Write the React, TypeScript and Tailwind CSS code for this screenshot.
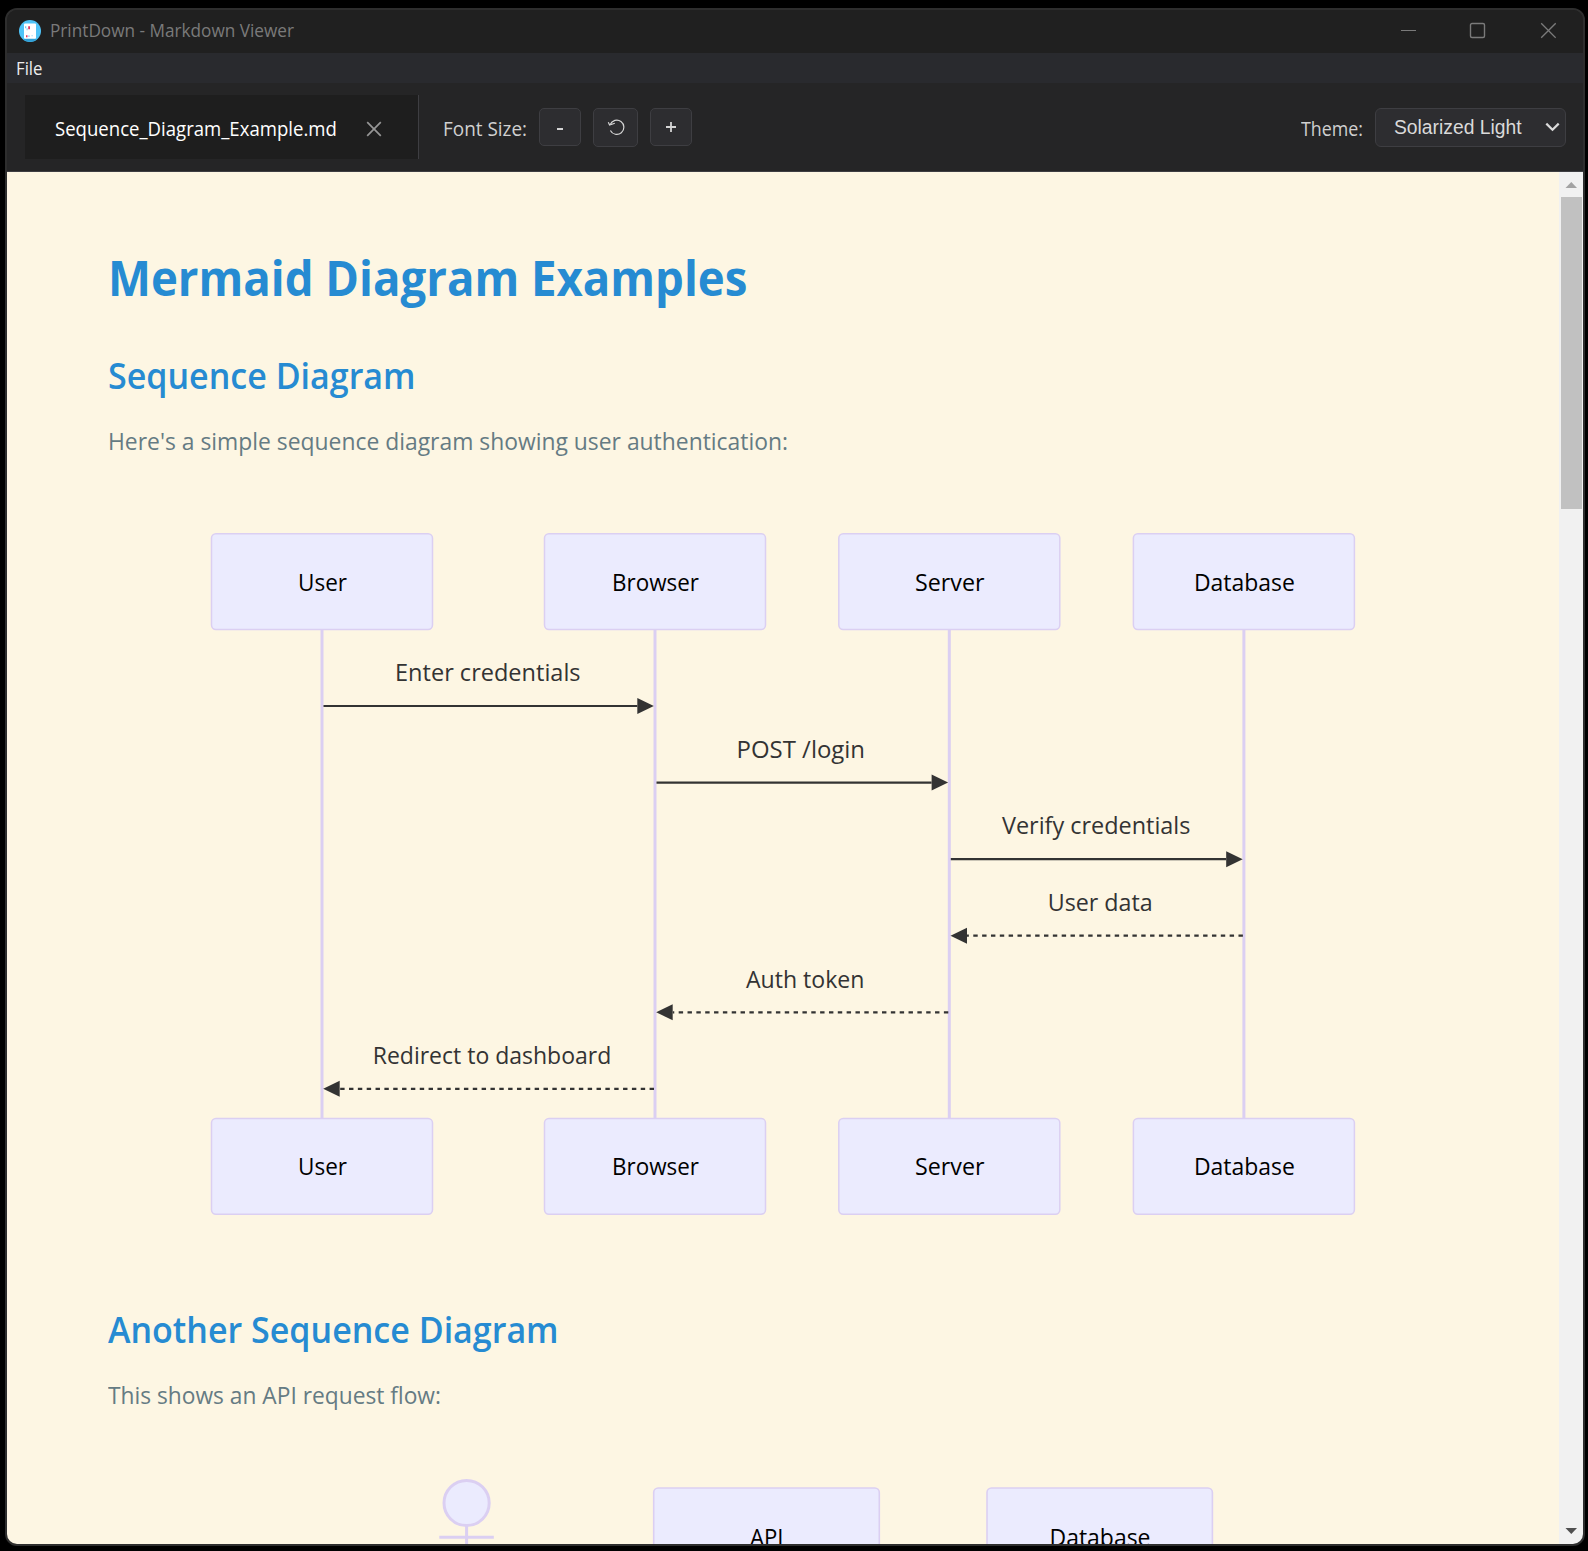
import type { ReactNode } from "react";

const LINE = "#dbcff2";
const FILL = "#ebebfe";
const INK = "#333333";

type Participant = { name: string; x: number; textWidth: number };
type Message = {
  text: string;
  from: number;
  to: number;
  y: number;
  center: number;
  textWidth: number;
};

const participants: Participant[] = [
  { name: "User", x: 322, textWidth: 49 },
  { name: "Browser", x: 655, textWidth: 87 },
  { name: "Server", x: 949.3, textWidth: 69.5 },
  { name: "Database", x: 1243.9, textWidth: 101 },
];

const messages: Message[] = [
  { text: "Enter credentials", from: 322, to: 655, y: 706, center: 487.8, textWidth: 185.5 },
  { text: "POST /login", from: 655, to: 949.3, y: 782.6, center: 800.8, textWidth: 128.5 },
  { text: "Verify credentials", from: 949.3, to: 1243.9, y: 859.2, center: 1096.2, textWidth: 188.5 },
  { text: "User data", from: 1243.9, to: 949.3, y: 935.7, center: 1100.2, textWidth: 105 },
  { text: "Auth token", from: 949.3, to: 655, y: 1012.3, center: 805.2, textWidth: 118.5 },
  { text: "Redirect to dashboard", from: 655, to: 322, y: 1088.8, center: 492, textWidth: 238.5 },
];

function Label({ x, y, width, fill, children }: { x: number; y: number; width: number; fill: string; children: ReactNode }) {
  return (
    <text
      x={x}
      y={y}
      textAnchor="middle"
      textLength={width}
      lengthAdjust="spacingAndGlyphs"
      fill={fill}
      className="font-['Open_Sans',sans-serif] text-[23.5px]"
    >
      {children}
    </text>
  );
}

function ParticipantBox({ p, y, textY }: { p: Participant; y: number; textY: number }) {
  return (
    <g>
      <rect x={p.x - 110.5} y={y} width="221" height="95.8" rx="4.4" fill={FILL} stroke={LINE} strokeWidth="1.5" />
      <Label x={p.x + 0.5} y={textY} width={p.textWidth} fill="#000000">
        {p.name}
      </Label>
    </g>
  );
}

function MessageArrow({ m }: { m: Message }) {
  const dir = m.to > m.from ? 1 : -1;
  const dashed = dir < 0;
  const tip = m.to - dir * (dashed ? 1.2 : 1.2);
  const base = tip - dir * 16.5;
  return (
    <g>
      <Label x={m.center} y={m.y - 24.8} width={m.textWidth} fill={INK}>
        {m.text}
      </Label>
      <line
        x1={dashed ? m.from - 1 : m.from + 1.5}
        x2={base}
        y1={m.y}
        y2={m.y}
        stroke={INK}
        strokeWidth="2.2"
        strokeDasharray={dashed ? "4.42 4.42" : undefined}
      />
      <path d={`M${base} ${m.y - 8} L${tip} ${m.y} L${base} ${m.y + 8} Z`} fill={INK} />
    </g>
  );
}

function AuthDiagram() {
  return (
    <svg className="mt-[59px] block h-[708px] w-[1350px]" viewBox="108 520 1350 708">
      {participants.map((p) => (
        <g key={p.name}>
          <line x1={p.x} x2={p.x} y1="629" y2="1119" stroke={LINE} strokeWidth="3" />
          <ParticipantBox p={p} y={533.7} textY={591} />
          <ParticipantBox p={p} y={1118.4} textY={1175} />
        </g>
      ))}
      {messages.map((m) => (
        <MessageArrow key={m.text} m={m} />
      ))}
    </svg>
  );
}

function ApiDiagram() {
  return (
    <svg className="mt-[55px] block h-[120px] w-[1350px]" viewBox="108 1470 1350 120">
      <g fill={FILL} stroke={LINE} strokeWidth="3">
        <line x1="466.6" x2="466.6" y1="1526" y2="1570" />
        <line x1="439.3" x2="493.8" y1="1537.3" y2="1537.3" />
        <circle cx="466.6" cy="1503" r="22.6" />
      </g>
      <rect x="653.7" y="1488" width="225.6" height="97.5" rx="4.5" fill={FILL} stroke={LINE} strokeWidth="1.6" />
      <rect x="987" y="1488" width="225.4" height="97.5" rx="4.5" fill={FILL} stroke={LINE} strokeWidth="1.6" />
      <Label x={766.8} y={1546} width={33.5} fill="#000000">
        API
      </Label>
      <Label x={1100} y={1546} width={101} fill="#000000">
        Database
      </Label>
    </svg>
  );
}

function AppIcon() {
  return (
    <svg className="h-[22px] w-[22px] shrink-0" viewBox="0 0 22 22">
      <circle cx="11" cy="11" r="11" fill="#4fc3f7" />
      <path d="M4 19.5 Q11 16 18 19.5 Q11 24 4 19.5Z" fill="#2f9fd6" />
      <rect x="5" y="3.5" width="12" height="15.3" rx="1" fill="#ffffff" />
      <path d="M9.2 6.3h1.8v3h-1.8zM7 15.2h1.5v2H7z" fill="#e0355f" />
      <path d="M6 6.3h1.3v2H6zM7.6 8.2h1v2h-1zM9.2 15.4h1.5v1.4H9.2zM12.6 15.2h1v1h-1z" fill="#7cc6ee" />
    </svg>
  );
}

function TitleBar() {
  return (
    <div className="flex h-[43px] shrink-0 items-center bg-[#202020] pb-[2px] pl-[12px] pr-[27px] text-[#7a7a7a]">
      <AppIcon />
      <span className="ml-[9px] inline-block origin-left scale-x-[.955] pb-px text-[18px] leading-[24px]">
        PrintDown - Markdown Viewer
      </span>
      <svg className="ml-auto h-[17px] w-[157px]" viewBox="0 0 157 17" fill="none" stroke="currentColor">
        <path d="M2 8.5h15" />
        <rect x="71.5" y="1.5" width="14" height="14" rx="1.5" strokeWidth="1.4" />
        <path d="M142.2 1.3l14.5 14.5M156.7 1.3L142.2 15.8" strokeWidth="1.3" />
      </svg>
    </div>
  );
}

function MenuBar() {
  return (
    <div className="flex h-[30px] shrink-0 items-center bg-[#292a2e] pb-px pl-[9px] text-[18px] leading-[24px] text-[#ededed]">
      <span className="inline-block origin-left scale-x-[.93]">File</span>
    </div>
  );
}

const buttonClass =
  "flex items-center justify-center rounded-[5px] border border-[#3e3e42] bg-[#2d2d30] text-[#d4d4d4]";

function Toolbar() {
  return (
    <div className="flex h-[89px] shrink-0 items-center border-b border-[#3e3e42] bg-[#252526] pl-[18px] pr-[17px] text-[19.5px] leading-[26px] text-[#d0d0d0]">
      <div className="flex h-[64px] w-[394px] items-center border-r border-[#3e3e42] bg-[#1e1e1e] pl-[30px] pt-[4px] text-white">
        <span className="inline-block w-[296px] origin-left scale-x-[.952]">Sequence_Diagram_Example.md</span>
        <svg className="ml-[15px] h-[16px] w-[16px]" viewBox="0 0 16 16" stroke="#969696" strokeWidth="1.7">
          <path d="M1.2 1.2l13.6 13.6M14.8 1.2L1.2 14.8" />
        </svg>
      </div>
      <span className="ml-[24px] inline-block w-[87px] origin-left scale-x-[.97] pt-[4px]">Font Size:</span>
      <div className="ml-[9px] flex items-start gap-[12px]">
        <div className={buttonClass + " h-[38px] w-[42px]"}>
          <svg className="h-[12px] w-[12px]" viewBox="0 0 12 12" stroke="currentColor" strokeWidth="2">
            <path d="M3 8h6" />
          </svg>
        </div>
        <div className={buttonClass + " h-[39px] w-[45px]"}>
          <svg className="h-[18px] w-[18px]" viewBox="0 0 18 18" fill="none" stroke="currentColor" strokeWidth="1.2">
            <path d="M3.2 6.6A7.1 7.1 0 1 1 3.4 12.4" />
            <path d="M1.3 4.2L2.6 7L7.8 5.2" />
          </svg>
        </div>
        <div className={buttonClass + " h-[38px] w-[42px]"}>
          <svg className="h-[12px] w-[12px]" viewBox="0 0 12 12" stroke="currentColor" strokeWidth="1.8">
            <path d="M1 6h10M6 1v10" />
          </svg>
        </div>
      </div>
      <span className="ml-auto mr-[6px] inline-block w-[68px] origin-left scale-x-[.915] pt-[4px]">Theme:</span>
      <div className="flex h-[39px] w-[191px] items-center rounded-[6px] border border-[#3e3e42] bg-[#2d2d30] pl-[18px] font-['Liberation_Sans',Arial,sans-serif] text-[19.3px] text-[#dadada]">
        <span className="whitespace-nowrap pt-[2px]">Solarized Light</span>
        <svg className="ml-auto mr-[5px] h-[10px] w-[15px]" viewBox="0 0 15 10" fill="none" stroke="currentColor" strokeWidth="2.2">
          <path d="M1.3 1.6l6.2 6.2l6.2-6.2" />
        </svg>
      </div>
    </div>
  );
}

function Scrollbar() {
  return (
    <div className="flex w-[24px] shrink-0 flex-col items-center bg-[#f1f1f1]">
      <svg className="h-[25px] w-[24px]" viewBox="0 0 24 25">
        <path d="M6.5 16h11.5L12.3 10z" fill="#a3a3a3" />
      </svg>
      <div className="h-[312px] w-[21px] bg-[#c1c1c1]" />
      <svg className="mt-auto h-[25px] w-[24px]" viewBox="0 0 24 25">
        <path d="M6.5 9h11.5L12.3 15z" fill="#505050" />
      </svg>
    </div>
  );
}

function Heading2({ children, className }: { children: ReactNode; className: string }) {
  return (
    <h2 className={"origin-left scale-x-[.945] text-[36px] font-semibold leading-[48px] text-[#268bd2] " + className}>
      {children}
    </h2>
  );
}

export default function App() {
  return (
    <div className="h-[1551px] w-[1588px] overflow-hidden bg-black pl-[5px] pt-[8px] font-['Open_Sans','Noto_Sans',sans-serif]">
      <div className="flex h-[1538px] w-[1580px] flex-col overflow-hidden rounded-[12px] border-2 border-[#2e2e2e] bg-[#202020]">
        <TitleBar />
        <MenuBar />
        <Toolbar />
        <div className="flex min-h-0 flex-1">
          <main className="min-w-0 flex-1 overflow-hidden bg-[#fdf6e3] pl-[101px]">
            <h1 className="mt-[74px] w-[1350px] origin-left scale-x-[.949] text-[48px] font-bold leading-[64px] text-[#268bd2]">
              Mermaid Diagram Examples
            </h1>
            <Heading2 className="mt-[42px] w-[1350px]">Sequence Diagram</Heading2>
            <p className="mt-[21px] w-[1350px] origin-left scale-x-[.953] text-[24px] leading-[40px] text-[#657b83]">
              Here's a simple sequence diagram showing user authentication:
            </p>
            <AuthDiagram />
            <Heading2 className="mt-[78px] w-[1350px]">Another Sequence Diagram</Heading2>
            <p className="mt-[21px] w-[1350px] origin-left scale-x-[.948] text-[24px] leading-[40px] text-[#657b83]">
              This shows an API request flow:
            </p>
            <ApiDiagram />
          </main>
          <Scrollbar />
        </div>
      </div>
    </div>
  );
}
